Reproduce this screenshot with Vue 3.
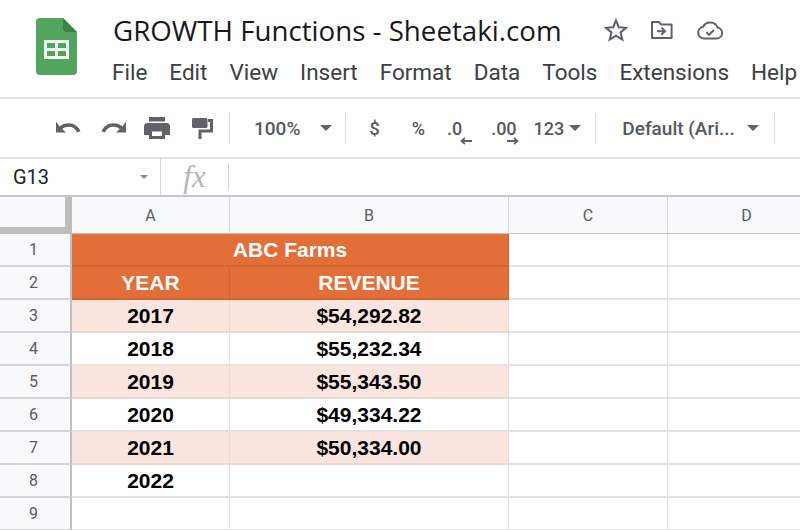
<template>
  <div class="app">
    <header class="top">
      <svg class="logo" viewBox="0 0 41 57" width="41" height="57">
        <path d="M4 0H27L41 14V53a4 4 0 0 1-4 4H4a4 4 0 0 1-4-4V4a4 4 0 0 1 4-4z" fill="#51a55f" />
        <path d="M27 0L41 14H31a4 4 0 0 1-4-4z" fill="#3b8448" />
        <path d="M8 22H33V41H8zM11 25V30H19V25zM22 25V30H30V25zM11 33V38H19V33zM22 33V38H30V33z" fill="#f3f8f3" fill-rule="evenodd" />
      </svg>
      <div class="top-text">
        <div class="title-row">
          <h1 class="title">GROWTH Functions - Sheetaki.com</h1>
          <svg class="title-icon star" viewBox="0 0 24 24" width="26" height="26">
            <path d="M12 3.2l2.6 6.2 6.7.5-5.1 4.4 1.6 6.5-5.8-3.5-5.8 3.5 1.6-6.5-5.1-4.4 6.7-.5z" fill="none" stroke="#5f6368" stroke-width="1.9" stroke-linejoin="miter" />
          </svg>
          <svg class="title-icon move" viewBox="0 0 24 24" width="26" height="24">
            <path d="M2 4h7l2 2.4h10.6V20H2z" fill="none" stroke="#5f6368" stroke-width="2" stroke-linejoin="round" />
            <path d="M7 13.2h7M11.4 9.6l3.6 3.6-3.6 3.6" fill="none" stroke="#5f6368" stroke-width="2" />
          </svg>
          <svg class="title-icon cloud" viewBox="0 0 28 24" width="28" height="24">
            <path d="M8 20.5a5.9 5.9 0 0 1-1-11.7A8 8 0 0 1 21.6 9.6 5.5 5.5 0 0 1 21 20.5z" fill="none" stroke="#5f6368" stroke-width="2" />
            <path d="M10.4 14.2l2.7 2.6 4.8-4.8" fill="none" stroke="#5f6368" stroke-width="2" />
          </svg>
        </div>
        <nav class="menu">
          <span v-for="item in menuItems" :key="item">{{ item }}</span>
        </nav>
      </div>
    </header>

    <div class="toolbar">
      <svg class="tool undo" viewBox="0 0 26 16" width="26" height="16">
        <path d="M3.6 6.4C6 4.4 9 3.2 12.600 3.200c5.400 0 10 3 11.800 8l-3.400 1.200c-1.400-3.600-4.600-5.600-8.400-5.600-2.400 0-4.600.8-6.300 2.200L10 12.400H0V1.600z" fill="#5f6368" />
      </svg>
      <svg class="tool redo" viewBox="0 0 26 16" width="26" height="16">
        <path d="M22.400 6.400C20 4.400 17 3.200 13.400 3.200c-5.400 0-10 3-11.800 8l3.400 1.200c1.400-3.600 4.600-5.600 8.400-5.600 2.400 0 4.600.8 6.300 2.200L16 12.400h10V1.600z" fill="#5f6368" />
      </svg>
      <svg class="tool print" viewBox="0 0 26 22" width="26" height="22">
        <path d="M5 0H21V4.500H5zM3.500 6H22.500A3.500 3.500 0 0 1 26 9.500V18H21V22H5V18H0V9.500A3.500 3.500 0 0 1 3.500 6zM8 14.500V19H18V14.500z" fill="#5f6368" fill-rule="evenodd" />
      </svg>
      <svg class="tool paint" viewBox="0 0 21 21" width="21" height="21">
        <path d="M0 1.500A1.500 1.500 0 0 1 1.500 0H14A1.500 1.500 0 0 1 15.500 1.500V8.500A1.500 1.500 0 0 1 14 10H1.500A1.500 1.500 0 0 1 0 8.500z" fill="#5f6368" />
        <path d="M16 2.500H19.500V13H8V21" fill="none" stroke="#5f6368" stroke-width="3" />
      </svg>
      <i class="sep sep-a"></i>
      <span class="zoom-val">100%</span>
      <i class="caret zoom-caret"></i>
      <i class="sep sep-b"></i>
      <span class="sym dollar">$</span>
      <span class="sym percent">%</span>
      <span class="dec dec-less">.0
        <svg viewBox="0 0 12 8" width="12" height="8"><path d="M12 4H2M5 .8L1.500 4 5 7.200" fill="none" stroke="#5f6368" stroke-width="1.800" /></svg>
      </span>
      <span class="dec dec-more">.00
        <svg viewBox="0 0 12 8" width="12" height="8"><path d="M0 4H10M7 .8L10.500 4 7 7.200" fill="none" stroke="#5f6368" stroke-width="1.800" /></svg>
      </span>
      <span class="sym fmt">123</span>
      <i class="caret fmt-caret"></i>
      <i class="sep sep-c"></i>
      <span class="font-name">Default (Ari...</span>
      <i class="caret font-caret"></i>
      <i class="sep sep-d"></i>
    </div>

    <div class="formula">
      <span class="cell-ref">G13</span>
      <i class="caret small"></i>
      <i class="sep-f first"></i>
      <span class="fx">fx</span>
      <i class="sep-f"></i>
    </div>

    <div class="sheet">
      <div class="corner"></div>
      <div v-for="c in columns" :key="c" class="col-head">{{ c }}</div>

      <template v-for="n in 9" :key="n">
        <div class="row-head">{{ n }}</div>
        <template v-if="n === 1">
          <div class="cell orange title-cell">ABC Farms</div>
        </template>
        <template v-else-if="n === 2">
          <div class="cell orange head-cell">YEAR</div>
          <div class="cell orange head-cell">REVENUE</div>
        </template>
        <template v-else>
          <div class="cell data" :class="{ band: rows[n - 3] && rows[n - 3].band }">{{ rows[n - 3] ? rows[n - 3].year : '' }}</div>
          <div class="cell data" :class="{ band: rows[n - 3] && rows[n - 3].band }">{{ rows[n - 3] ? rows[n - 3].revenue : '' }}</div>
        </template>
        <div class="cell"></div>
        <div class="cell"></div>
      </template>
    </div>
  </div>
</template>

<script setup>
const menuItems = ['File', 'Edit', 'View', 'Insert', 'Format', 'Data', 'Tools', 'Extensions', 'Help']
const columns = ['A', 'B', 'C', 'D']

const rows = [
  { year: '2017', revenue: '$54,292.82', band: true },
  { year: '2018', revenue: '$55,232.34', band: false },
  { year: '2019', revenue: '$55,343.50', band: true },
  { year: '2020', revenue: '$49,334.22', band: false },
  { year: '2021', revenue: '$50,334.00', band: true },
  { year: '2022', revenue: '', band: false }
]
</script>

<style>
html, body {
  margin: 0;
  background: #fff;
  overflow: hidden;
}
</style>

<style scoped>
.app {
  width: 800px;
  height: 530px;
  overflow: hidden;
  background: #fff;
  font-family: Roboto, "Liberation Sans", sans-serif;
}

.top {
  height: 99px;
  box-sizing: border-box;
  border-bottom: 2px solid #e3e4e6;
  display: flex;
  padding: 18px 0 0 36px;
}

.logo {
  margin-right: 36px;
  flex: none;
}

.top-text {
  margin-top: -5px;
  flex: none;
}

.title-row {
  display: flex;
  align-items: center;
  height: 34px;
}

.title {
  margin: 0;
  font-family: "Open Sans", sans-serif;
  font-size: 27.700px;
  font-weight: 400;
  color: #17181a;
  white-space: nowrap;
  width: 490px;
}

.title-icon {
  flex: none;
}

.star {
  margin-right: 20px;
}

.move {
  margin-right: 21px;
}

.menu {
  display: flex;
  gap: 22px;
  margin: 12px 0 0 -1px;
  font-size: 22.500px;
  color: #3c4043;
  white-space: nowrap;
}

.toolbar {
  height: 60px;
  box-sizing: border-box;
  border-bottom: 2px solid #e3e4e6;
  display: flex;
  align-items: center;
  color: #56595d;
  white-space: nowrap;
}

.tool {
  flex: none;
}

.undo {
  margin-left: 56px;
}

.redo {
  margin-left: 18px;
}

.print {
  margin-left: 18px;
}

.paint {
  margin-left: 22px;
}

.sep {
  width: 1px;
  height: 31px;
  background: #dadce0;
  flex: none;
}

.sep-a {
  margin-left: 16px;
}

.zoom-val {
  margin-left: 24px;
  font-size: 19px;
  font-weight: 500;
}

.caret {
  width: 0;
  height: 0;
  border-left: 6px solid transparent;
  border-right: 6px solid transparent;
  border-top: 6px solid #5f6368;
  flex: none;
}

.zoom-caret {
  margin-left: 20px;
}

.sep-b {
  margin-left: 13px;
}

.sym {
  font-size: 18px;
  font-weight: 500;
}

.dollar {
  margin-left: 23px;
}

.percent {
  margin-left: 32px;
}

.dec {
  position: relative;
  font-size: 18px;
  font-weight: 500;
}

.dec svg {
  position: absolute;
  top: 19px;
}

.dec-less {
  margin-left: 22px;
}

.dec-less svg {
  left: 13px;
}

.dec-more {
  margin-left: 29px;
}

.dec-more svg {
  left: 16px;
}

.fmt {
  margin-left: 17px;
}

.fmt-caret {
  margin-left: 5px;
}

.sep-c {
  margin-left: 14px;
}

.font-name {
  margin-left: 26px;
  width: 125px;
  font-size: 19px;
  font-weight: 500;
}

.sep-d {
  margin-left: 15px;
}

.formula {
  height: 38px;
  box-sizing: border-box;
  border-bottom: 2px solid #c6c7c9;
  display: flex;
  align-items: center;
}

.cell-ref {
  margin-left: 13px;
  width: 127px;
  font-size: 20px;
  color: #222;
}

.caret.small {
  border-left-width: 4px;
  border-right-width: 4px;
  border-top-width: 4px;
  border-top-color: #85888c;
}

.sep-f {
  width: 1px;
  height: 26px;
  background: #d5d6d8;
  flex: none;
}

.sep-f.first {
  margin-left: 12px;
  height: 36px;
}

.fx {
  width: 67px;
  text-align: center;
  font-family: "Liberation Serif", serif;
  font-style: italic;
  font-size: 31px;
  color: #b5b6b8;
}

.sheet {
  display: grid;
  grid-template-columns: 72px 158px 279px 159px 158px;
  grid-template-rows: 37px repeat(9, 33px);
}

.corner {
  box-sizing: border-box;
  background: #f8f9fa;
  border-right: 7px solid #bdbdbd;
  border-bottom: 7px solid #bdbdbd;
}

.col-head {
  box-sizing: border-box;
  background: #f8f9fa;
  border-right: 1px solid #d4d5d7;
  border-bottom: 1px solid #c0c1c3;
  display: flex;
  align-items: center;
  justify-content: center;
  font-size: 16px;
  color: #595c60;
}

.row-head {
  box-sizing: border-box;
  background: #f8f9fa;
  border-right: 2px solid #c0c1c3;
  border-bottom: 2px solid #d4d5d7;
  display: flex;
  align-items: center;
  justify-content: center;
  padding-right: 3px;
  font-size: 16px;
  color: #595c60;
}

.cell {
  box-sizing: border-box;
  background: #fff;
  border-right: 1px solid #e2e3e3;
  border-bottom: 2px solid #e2e3e3;
  display: flex;
  align-items: center;
  justify-content: center;
  font-family: "Liberation Sans", Arial, sans-serif;
}

.orange {
  background: #e46e37;
  color: #fff;
  font-weight: 700;
  border-color: #d16532;
}

.title-cell {
  grid-column: span 2;
  font-size: 21px;
}

.head-cell {
  font-size: 21px;
}

.data {
  font-size: 21px;
  font-weight: 700;
  color: #000;
}

.band {
  background: #fbe6df;
  border-color: #ecd9d1;
}
</style>
